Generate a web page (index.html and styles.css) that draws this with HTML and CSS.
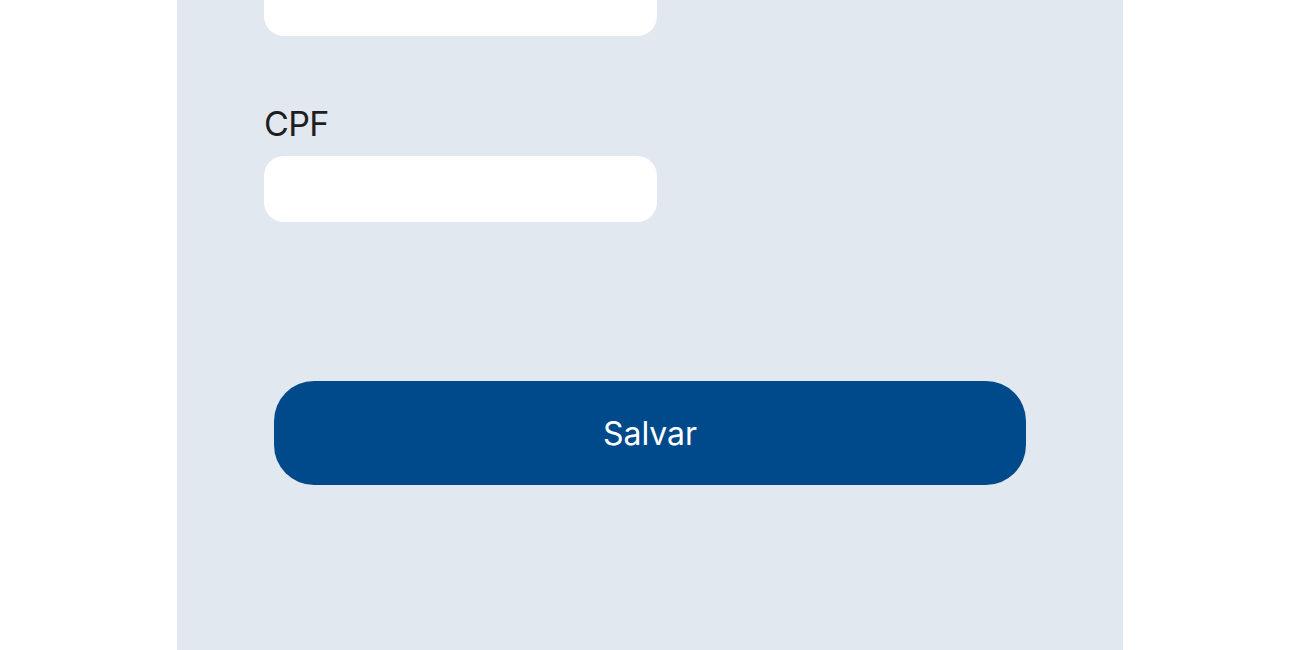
FILE: index.html
```html
<!DOCTYPE html>
<html lang="pt-BR">
<head>
<meta charset="utf-8">
<title>Cadastro</title>
<link rel="stylesheet" href="styles.css">
</head>
<body>
  <main class="panel">
    <form class="form">
      <div class="field field-first">
        <input class="input" type="text" aria-label="Nome">
      </div>
      <div class="field">
        <label class="label" for="cpf">CPF</label>
        <input class="input" id="cpf" type="text">
      </div>
      <button class="btn" type="button">Salvar</button>
    </form>
  </main>
</body>
</html>
```

FILE: styles.css
```css
* { box-sizing: border-box; }
html, body { margin: 0; padding: 0; background: #ffffff; height: 100%; overflow: hidden; }
body { font-family: Inter, "Noto Sans", sans-serif; }
.panel {
  width: 946px;
  margin: 0 auto;
  height: 650px;
  background: #e2e8f0;
  overflow: hidden;
}
.form {
  display: flex;
  flex-direction: column;
  padding: 0 87px;
  margin-top: -30px;
}
.field { display: flex; flex-direction: column; }
.field-first { margin-bottom: 68px; }
.label {
  font-size: 34px;
  line-height: 40px;
  letter-spacing: -0.6px;
  color: #1e1e1e;
  margin-bottom: 12px;
}
.input {
  width: 393px;
  height: 66px;
  border: none;
  border-radius: 20px;
  background: #ffffff;
  outline: none;
}
.btn {
  margin: 159px 10px 0;
  height: 104px;
  border: none;
  border-radius: 40px;
  background: #004a8c;
  color: #ffffff;
  font-family: Inter, "Noto Sans", sans-serif;
  font-size: 32px;
  cursor: pointer;
}
```
